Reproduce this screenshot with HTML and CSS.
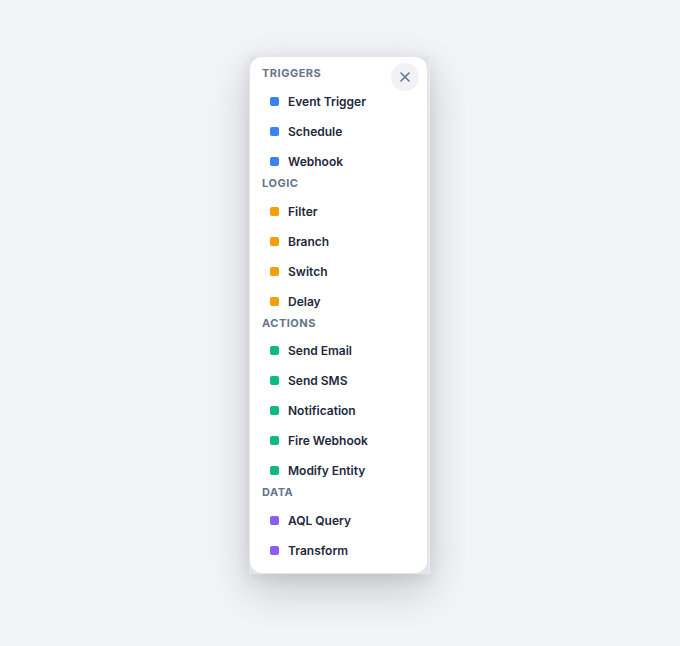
FILE: index.html
```html
<!DOCTYPE html>
<html lang="en">
<head>
  <meta charset="UTF-8" />
  <meta name="viewport" content="width=device-width, initial-scale=1.0"/>
  <title>Node Palette</title>
  <link rel="stylesheet" href="styles.css">
</head>
<body>
  <!-- Node palette -->
  <div class="palette-frame">
    <div class="palette">
      <button class="close-btn" aria-label="Close">
        <svg width="12" height="12" viewBox="0 0 12 12" fill="none" stroke="currentColor" stroke-width="1.6" stroke-linecap="round">
          <path d="M2 2 L10 10 M10 2 L2 10"/>
        </svg>
      </button>

      <div class="section">
        <div class="section-title">Triggers</div>
        <div class="item"><span class="dot blue"></span>Event Trigger</div>
        <div class="item"><span class="dot blue"></span>Schedule</div>
        <div class="item"><span class="dot blue"></span>Webhook</div>
      </div>

      <div class="section">
        <div class="section-title">Logic</div>
        <div class="item"><span class="dot amber"></span>Filter</div>
        <div class="item"><span class="dot amber"></span>Branch</div>
        <div class="item"><span class="dot amber"></span>Switch</div>
        <div class="item"><span class="dot amber"></span>Delay</div>
      </div>

      <div class="section">
        <div class="section-title tight">Actions</div>
        <div class="item"><span class="dot green"></span>Send Email</div>
        <div class="item"><span class="dot green"></span>Send SMS</div>
        <div class="item"><span class="dot green"></span>Notification</div>
        <div class="item"><span class="dot green"></span>Fire Webhook</div>
        <div class="item"><span class="dot green"></span>Modify Entity</div>
      </div>

      <div class="section">
        <div class="section-title">Data</div>
        <div class="item"><span class="dot purple"></span>AQL Query</div>
        <div class="item"><span class="dot purple"></span>Transform</div>
      </div>
    </div>
  </div>
</body>
</html>
```

FILE: styles.css
```css
body {
  font-family: Inter, 'Noto Sans', sans-serif;
  background-color: #f3f4f6;
  margin: 0;
  padding: 56px 0 0;
  min-height: 100vh;
  box-sizing: border-box;
  display: flex;
  justify-content: center;
  align-items: flex-start;
  color: #1e293b;
}

.palette-frame {
  width: 179px;
  margin-left: -1px;
  background-color: #e0e3e7;
  border: 1px solid #e4e6ea;
  border-right-color: #eceef1;
  box-shadow: 0 16px 40px rgba(15, 23, 42, 0.2), 0 4px 14px rgba(15, 23, 42, 0.08);
}

.palette {
  position: relative;
  background: white;
  border-radius: 12px;
  margin-right: 2px;
  padding: 9px 12px 8px;
}

.close-btn {
  position: absolute;
  top: 6px;
  right: 8px;
  width: 28px;
  height: 28px;
  border: none;
  border-radius: 50%;
  background-color: #f0f2f5;
  color: #64748b;
  display: flex;
  align-items: center;
  justify-content: center;
  padding: 0;
  cursor: pointer;
}

.section-title {
  font-size: 11px;
  line-height: 14px;
  font-weight: 700;
  letter-spacing: 0.5px;
  text-transform: uppercase;
  color: #64748b;
  margin-bottom: 6px;
}

.section-title.tight {
  margin-bottom: 5px;
}

.item {
  display: flex;
  align-items: center;
  gap: 9px;
  height: 30px;
  padding: 0 8px;
  font-size: 12px;
  font-weight: 600;
  color: #1e293b;
  border-radius: 6px;
  cursor: pointer;
}

.item:hover {
  background-color: #f1f5f9;
}

.dot {
  width: 9px;
  height: 9px;
  border-radius: 2px;
  flex-shrink: 0;
}

.blue { background-color: #3b82f6; }
.amber { background-color: #f59e0b; }
.green { background-color: #10b981; }
.purple { background-color: #8b5cf6; }
```
